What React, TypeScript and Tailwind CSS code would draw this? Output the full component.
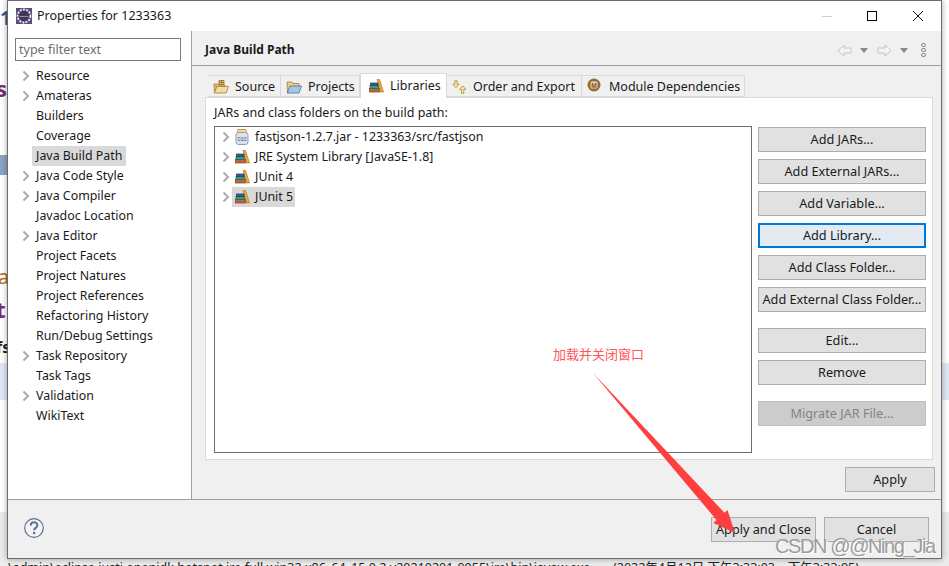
const uiFont = 'font-["Noto_Sans",sans-serif]';

const treeItems = [
  { label: 'Resource', arrow: true },
  { label: 'Amateras', arrow: true },
  { label: 'Builders' },
  { label: 'Coverage' },
  { label: 'Java Build Path', selected: true },
  { label: 'Java Code Style', arrow: true },
  { label: 'Java Compiler', arrow: true },
  { label: 'Javadoc Location' },
  { label: 'Java Editor', arrow: true },
  { label: 'Project Facets' },
  { label: 'Project Natures' },
  { label: 'Project References' },
  { label: 'Refactoring History' },
  { label: 'Run/Debug Settings' },
  { label: 'Task Repository', arrow: true },
  { label: 'Task Tags' },
  { label: 'Validation', arrow: true },
  { label: 'WikiText' },
];

function Chevron() {
  return (
    <svg width="8" height="12" viewBox="0 0 8 12" className="shrink-0">
      <path d="M1.5 1.5 6 6l-4.500 4.500" fill="none" stroke="#ababab" strokeWidth="2" />
    </svg>
  );
}

function LibraryIcon() {
  return (
    <svg width="16" height="16" viewBox="0 0 16 16" className="shrink-0">
      <path d="M9 1.500h2.500L15.500 14H12.500z" fill="#eba93f" stroke="#b57a20" strokeWidth=".7" />
      <rect x="1.500" y="10.500" width="10" height="3.500" fill="#b9683a" stroke="#7d4524" strokeWidth=".7" />
      <rect x="2" y="7.500" width="8.500" height="3" fill="#3d9a7c" stroke="#256350" strokeWidth=".7" />
      <rect x="2.500" y="5" width="7.500" height="2.500" fill="#2f5f92" stroke="#1f3f66" strokeWidth=".7" />
    </svg>
  );
}

function JarIcon() {
  return (
    <svg width="14" height="16" viewBox="0 0 14 16" className="shrink-0">
      <rect x="1" y="3.500" width="12" height="12" rx="2.500" fill="#d9e3ef" stroke="#8e9db3" />
      <rect x="2.500" y="0.500" width="9" height="3" rx="1" fill="#ecd9a8" stroke="#b49c62" />
      <text x="7" y="11.500" textAnchor="middle" fontSize="5.500" fill="#44506a" fontFamily="Liberation Sans, sans-serif">010</text>
    </svg>
  );
}

function SourceIcon() {
  return (
    <svg width="16" height="16" viewBox="0 0 16 16" className="shrink-0">
      <path d="M6 1.500h5v4H6zM8.500 1.500v4M6 3.500h5" fill="#e8c27c" stroke="#8f6a33" strokeWidth=".8" />
      <path d="M1 5h4l1 1h6v2H4L1.500 14z" fill="#e3b768" stroke="#a87c38" strokeWidth=".8" />
      <path d="M4 7.500h11.500L13 14H1.200z" fill="#f6dca0" stroke="#a87c38" strokeWidth=".8" />
    </svg>
  );
}

function ProjectsIcon() {
  return (
    <svg width="16" height="16" viewBox="0 0 16 16" className="shrink-0">
      <path d="M1 3h5l1 1.500h6V8H4L1.500 14z" fill="#eecb85" stroke="#a87c38" strokeWidth=".8" />
      <path d="M4 7h11.500L13 14H1.200z" fill="#a9c6ea" stroke="#486f9f" strokeWidth=".8" />
    </svg>
  );
}

function OrderIcon() {
  return (
    <svg width="15" height="16" viewBox="0 0 19 18" className="shrink-0">
      <path d="M3.500 1h3v4.500h2.500L5 10 1 5.500h2.500z" fill="#fbe7a6" stroke="#b08a2e" strokeWidth="1" />
      <path d="M12 17v-5H9.500L13.500 7.500l4 4.500H15v5z" fill="#fbe7a6" stroke="#b08a2e" strokeWidth="1" />
    </svg>
  );
}

function ModuleIcon() {
  return (
    <svg width="14" height="14" viewBox="0 0 14 14" className="shrink-0 mb-[4px]">
      <circle cx="7" cy="7" r="6.500" fill="#9a6a34" />
      <rect x="3.500" y="3.500" width="7" height="7" rx="1.500" fill="#e8d9c2" />
      <text x="7" y="9.500" textAnchor="middle" fontSize="6.500" fontWeight="700" fill="#7a4f22" fontFamily="Liberation Sans, sans-serif">M</text>
    </svg>
  );
}

function NavArrow({ flip }: { flip?: boolean }) {
  return (
    <svg width="15" height="13" viewBox="0 0 15 13" className={flip ? 'shrink-0 -scale-x-100' : 'shrink-0'}>
      <path d="M7 1 1 6.500 7 12V9h7V4H7z" fill="#f4f4f4" stroke="#c4c4c4" />
    </svg>
  );
}

function Caret() {
  return <span className="block w-0 h-0 border-x-[4px] border-x-transparent border-t-[5px] border-t-[#8a8a8a]" />;
}

function DialogButton({ label, focused, disabled, className = 'h-[25px] w-[168px]' }: { label: string; focused?: boolean; disabled?: boolean; className?: string }) {
  let tone = 'bg-[#e1e1e1] border-[#adadad] text-[#1a1a1a]';
  if (focused) tone = 'bg-[#e3eaf2] border-[#0078d7] border-2 text-[#1a1a1a]';
  if (disabled) tone = 'bg-[#cccccc] border-[#bfbfbf] text-[#838383]';
  return (
    <div className={`${className} ${tone} border flex items-center justify-center text-[12.7px] leading-none shrink-0`}>
      {label}
    </div>
  );
}

function Tab({ label, icon, active, className }: { label: string; icon: React.ReactNode; active?: boolean; className: string }) {
  return (
    <div
      className={
        active
          ? `${className} h-[25px] -mb-px z-10 bg-white border border-b-0 border-[#d9d9d9] flex items-center gap-[6px] pl-[7px] text-[12.500px] whitespace-nowrap text-[#1a1a1a]`
          : `${className} h-[22px] pt-[2px] bg-[#f0f0f0] border border-[#d9d9d9] border-l-0 flex items-center gap-[6px] pl-[5px] text-[12.500px] whitespace-nowrap text-[#1a1a1a]`
      }
    >
      {icon}
      <span>{label}</span>
    </div>
  );
}

export default function App() {
  return (
    <div className={`${uiFont} relative w-[949px] h-[566px] overflow-hidden bg-white`}>
      {/* page behind the dialog */}
      <div className="absolute left-0 right-0 top-[363px] h-[37px] bg-[#dfe9f5]" />
      <div className="absolute left-0 right-0 top-[512px] bottom-0 bg-[#ececec]" />
      <div className="absolute left-0 top-[3px] text-[20px] font-bold text-[#2a5d94]">1</div>
      <div className="absolute left-[-4px] top-[72px] text-[22px] font-bold text-[#7a2b78]">s</div>
      <div className="absolute left-0 top-[155px] w-[7px] h-[20px] bg-[#8aa4c4]" />
      <div className="absolute left-[-2px] top-[262px] text-[20px] text-[#b5651d]">a</div>
      <div className="absolute left-[-4px] top-[293px] text-[22px] font-bold text-[#7a2b78]">t</div>
      <div className="absolute left-[-4px] top-[335px] text-[16px] font-bold text-[#222]">fs</div>
      <div className="absolute left-[8px] top-[560px] w-[590px] overflow-hidden text-[12.500px] leading-[16px] whitespace-nowrap text-[#222]">
        \admin\eclipse.justj.openjdk.hotspot.jre.full.win32.x86_64_15.0.2.v20210201-0955\jre\bin\javaw.exe
      </div>
      <div className={`absolute left-[613px] top-[560px] text-[12.500px] leading-[16px] whitespace-nowrap text-[#222] font-["Noto_Sans","Noto_Sans_CJK_SC",sans-serif]`}>
        (2022年4月12日 下午3:33:03 – 下午3:33:05)
      </div>

      {/* properties dialog */}
      <div className="absolute left-[7px] top-0 w-[935px] h-[559px] flex flex-col bg-[#f0f0f0] border border-[#6b6b6b] shadow-[0_0_6px_rgba(0,0,0,0.35)] text-[#1a1a1a]">
        <div className="h-[30px] bg-white flex items-center shrink-0">
          <svg width="16" height="16" viewBox="0 0 16 16" className="ml-[8px] shrink-0">
            <rect width="16" height="16" fill="#5d4a7e" />
            <circle cx="8" cy="8" r="6.500" fill="none" stroke="#ededed" strokeWidth="1.800" strokeDasharray="2 1.200" />
            <circle cx="8" cy="8" r="5" fill="#3b3b52" />
            <path d="M3.500 8.500h9" stroke="#8f8fb0" strokeWidth="1" />
          </svg>
          <span className="ml-[5px] text-[12.500px]">Properties for 1233363</span>
          <div className="ml-auto flex items-center">
            <div className="w-[10px] h-px bg-[#cfcfcf] mr-[35px]" />
            <div className="w-[10px] h-[10px] border border-black mr-[36px]" />
            <svg width="10" height="10" viewBox="0 0 10 10" className="mr-[18px]">
              <path d="M0 0l10 10M10 0 0 10" stroke="#111" strokeWidth="1" />
            </svg>
          </div>
        </div>

        <div className="flex-1 flex min-h-0">
          <aside className="w-[184px] bg-white border-r border-[#a0a0a0] shrink-0 pt-[7px]">
            <div className="ml-[7px] w-[166px] h-[23px] border border-[#7a7a7a] flex items-center pl-[3px] pt-[2px] text-[12.500px] text-[#6d6d6d]">
              type filter text
            </div>
            <ul className="mt-[5px]">
              {treeItems.map((item) => (
                <li key={item.label} className="h-[20px] flex items-center text-[12.400px] leading-none">
                  <span className="w-[24px] pl-[14px] flex justify-start">{item.arrow && <Chevron />}</span>
                  <span className={item.selected ? 'h-[20px] flex items-center px-[4px] bg-[#d9d9d9]' : 'px-[4px]'}>{item.label}</span>
                </li>
              ))}
            </ul>
          </aside>

          <section className="flex-1 flex flex-col min-w-0">
            <div className="h-[35px] border-b border-[#a0a0a0] flex items-center shrink-0 pt-[4px] pl-[13px] pr-[15px]">
              <h1 className="text-[12px] font-bold">Java Build Path</h1>
              <div className="ml-auto flex items-center">
                <NavArrow />
                <span className="ml-[8px] mr-[9px]"><Caret /></span>
                <NavArrow flip />
                <span className="ml-[8px] mr-[13px]"><Caret /></span>
                <div className="flex flex-col gap-[1px]">
                  <span className="w-[5px] h-[4px] rounded-full border border-[#8a8a8a]" />
                  <span className="w-[5px] h-[4px] rounded-full border border-[#8a8a8a]" />
                  <span className="w-[5px] h-[4px] rounded-full border border-[#8a8a8a]" />
                </div>
              </div>
            </div>

            <div className="flex-1 flex flex-col pl-[13px] pr-[6px] pt-[6px] min-h-0">
              <div className="flex items-end pl-[3px] h-[25px] shrink-0">
                <Tab label="Source" icon={<SourceIcon />} className="w-[73px] border-l" />
                <Tab label="Projects" icon={<ProjectsIcon />} className="w-[79px]" />
                <Tab label="Libraries" icon={<LibraryIcon />} active className="w-[87px]" />
                <Tab label="Order and Export" icon={<OrderIcon />} className="w-[135px]" />
                <Tab label="Module Dependencies" icon={<ModuleIcon />} className="w-[163px] gap-[8px]" />
              </div>
              <div className="h-[363px] mr-[2px] bg-white border border-[#d9d9d9] pl-[8px] pr-[6px] shrink-0">
                <p className="h-[28px] pt-[3px] flex items-center text-[12.500px]">JARs and class folders on the build path:</p>
                <div className="flex gap-[6px]">
                  <div className="w-[538px] h-[327px] border border-[#6e6e6e] shrink-0">
                    {[
                      { label: 'fastjson-1.2.7.jar - 1233363/src/fastjson', jar: true },
                      { label: 'JRE System Library [JavaSE-1.8]' },
                      { label: 'JUnit 4' },
                      { label: 'JUnit 5', selected: true },
                    ].map((row) => (
                      <div key={row.label} className="h-[20px] flex items-center text-[12.400px] leading-none">
                        <span className="pl-[7px] w-[17px] shrink-0"><Chevron /></span>
                        <span className={row.selected ? 'flex items-center h-[20px] gap-[5px] pr-[2px] pl-[2px] bg-[#d9d9d9]' : 'flex items-center h-[20px] gap-[5px] pl-[2px]'}>
                          {row.jar ? <span className="w-[16px] flex justify-center"><JarIcon /></span> : <LibraryIcon />}
                          {row.label}
                        </span>
                      </div>
                    ))}
                  </div>
                  <div className="flex flex-col pt-px">
                    <div className="flex flex-col gap-[7px]">
                      <DialogButton label="Add JARs..." />
                      <DialogButton label="Add External JARs..." />
                      <DialogButton label="Add Variable..." />
                      <DialogButton label="Add Library..." focused />
                      <DialogButton label="Add Class Folder..." />
                      <DialogButton label="Add External Class Folder..." />
                    </div>
                    <div className="flex flex-col gap-[7px] mt-[16px]">
                      <DialogButton label="Edit..." />
                      <DialogButton label="Remove" />
                    </div>
                    <div className="mt-[16px]">
                      <DialogButton label="Migrate JAR File..." disabled />
                    </div>
                  </div>
                </div>
              </div>
              <div className="flex justify-end pt-[7px]">
                <DialogButton label="Apply" className="h-[25px] w-[90px]" />
              </div>
            </div>
          </section>
        </div>

        <footer className="h-[59px] border-t border-[#a0a0a0] flex items-center shrink-0 pl-[16px] pr-[12px]">
          <svg width="20" height="20" viewBox="0 0 20 20" className="mb-[2px]">
            <circle cx="10" cy="10" r="9.300" fill="#f4f4f6" stroke="#5f6f8f" strokeWidth="1.200" />
            <path d="M6.800 7.500c0-4.200 6.600-4.200 6.600-.2 0 2.600-3.300 2.500-3.300 5" fill="none" stroke="#5f6f8f" strokeWidth="2" />
            <circle cx="10.100" cy="15" r="1.300" fill="#5f6f8f" />
          </svg>
          <div className="ml-auto flex gap-[8px]">
            <DialogButton label="Apply and Close" className="h-[25px] w-[105px]" />
            <DialogButton label="Cancel" className="h-[25px] w-[105px]" />
          </div>
        </footer>
      </div>

      {/* annotation drawn over the screenshot */}
      <div className={`absolute left-[553px] top-[345px] text-[13px] leading-[18px] text-[#f55] font-["Noto_Sans_CJK_SC",sans-serif]`}>加载并关闭窗口</div>
      <svg width="949" height="566" viewBox="0 0 949 566" className="absolute inset-0 pointer-events-none">
        <path d="M593 373 724.500 512.800 727.500 510 735 533 713.500 523 716.500 520z" fill="#ff3f3f" />
      </svg>
      <div className={`absolute left-[775px] top-[534px] text-[20px] leading-[24px] tracking-[-1.4px] whitespace-nowrap text-[#9c9c9c] [text-shadow:1px_1px_0_#fff] font-["Liberation_Sans",sans-serif]`}>
        CSDN @@Ning_Jia
      </div>
    </div>
  );
}
